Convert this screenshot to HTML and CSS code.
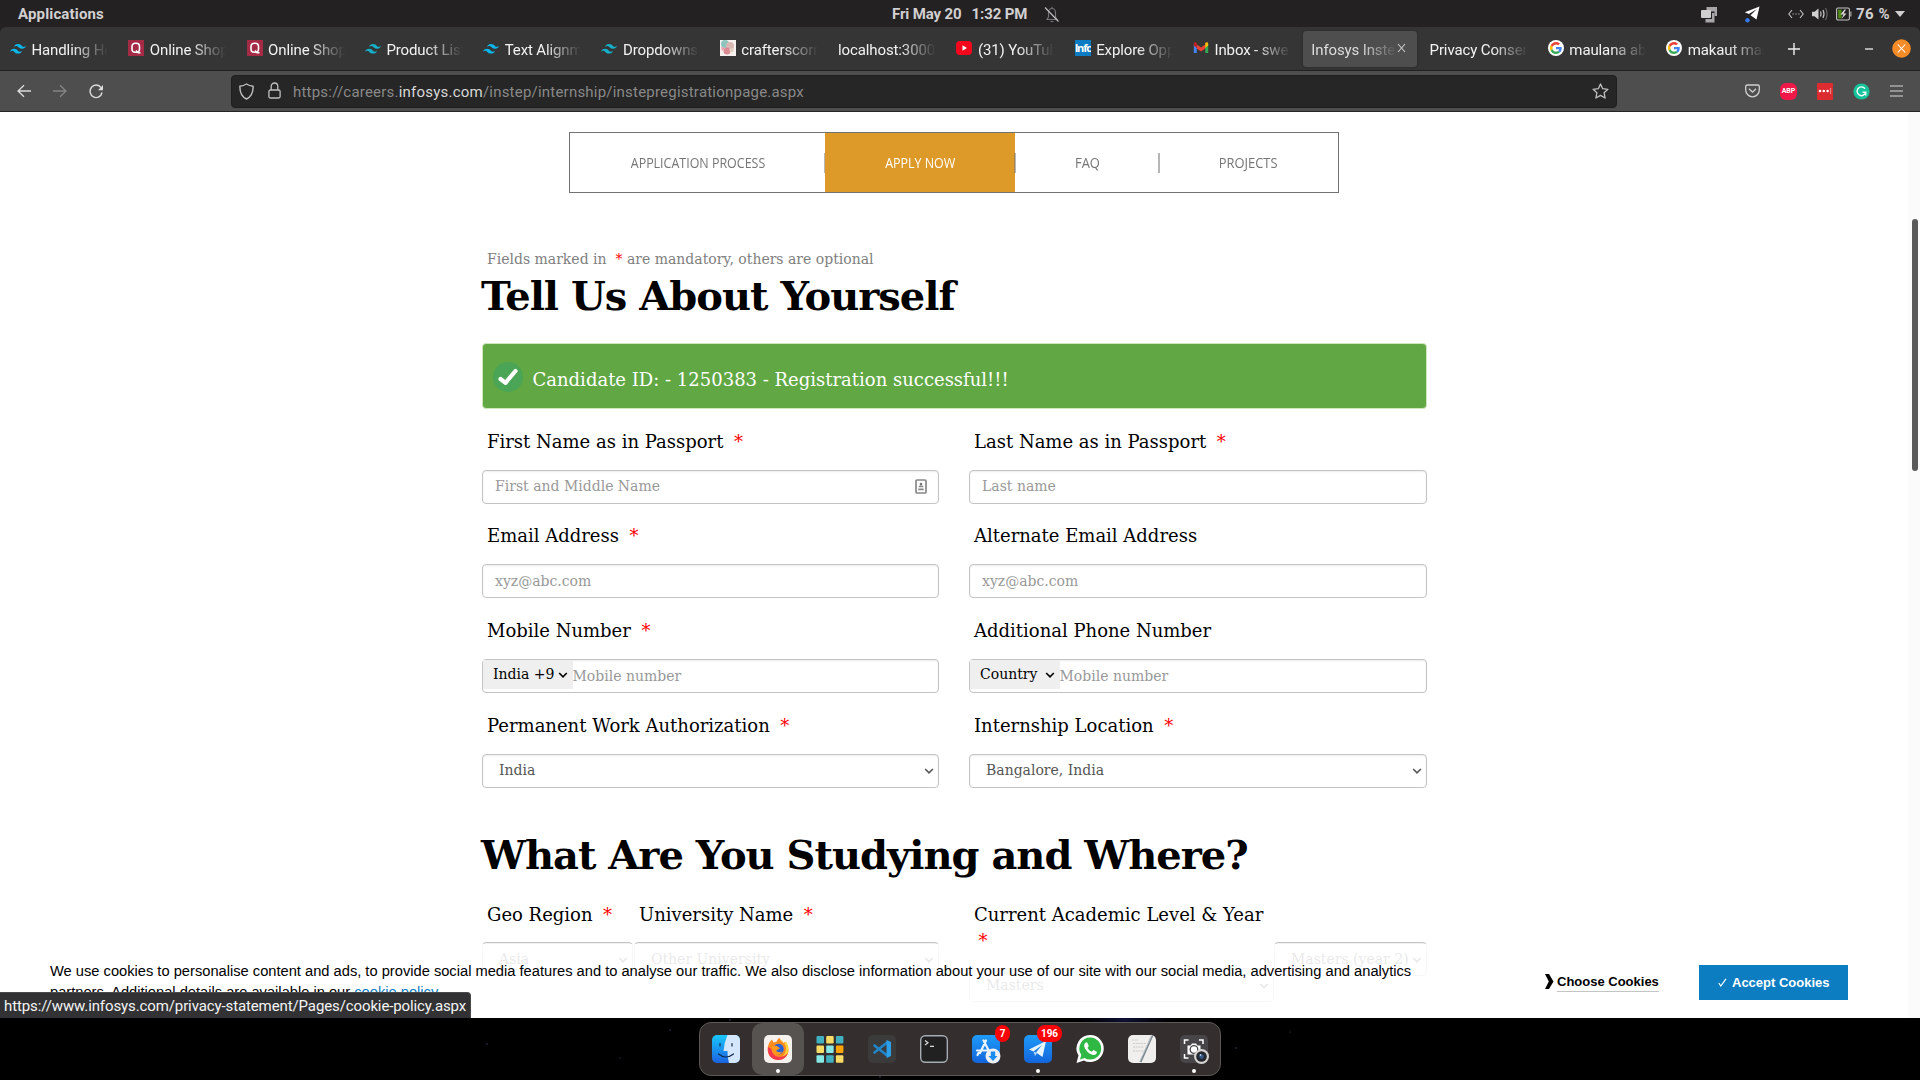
FILE: index.html
```html
<!DOCTYPE html>
<html lang="en">
<head>
<meta charset="utf-8">
<title>Infosys InStep</title>
<link rel="stylesheet" href="styles.css">
</head>
<body>
<svg width="0" height="0" class="defs">
  <symbol id="tailwind" viewBox="0 0 24 24"><path d="M12 6c-3.200 0-5.200 1.600-6 4.800 1.200-1.600 2.600-2.200 4.200-1.800.913.228 1.565.89 2.288 1.624C13.666 11.818 15.027 13.200 18 13.200c3.200 0 5.200-1.600 6-4.800-1.200 1.600-2.600 2.200-4.200 1.800-.913-.228-1.565-.89-2.288-1.624C16.337 7.382 14.976 6 12 6zM6 13.200c-3.200 0-5.200 1.600-6 4.800 1.200-1.600 2.600-2.200 4.200-1.800.913.228 1.565.89 2.288 1.624C7.666 19.018 9.027 20.400 12 20.400c3.200 0 5.200-1.600 6-4.800-1.200 1.600-2.600 2.200-4.200 1.800-.913-.228-1.565-.89-2.288-1.624C10.337 14.582 8.976 13.200 6 13.200z"/></symbol>
  <symbol id="quill" viewBox="0 0 16 16"><rect width="16" height="16" fill="#a42a45"/><rect x="4" y="3.200" width="7.500" height="9" rx="3.300" fill="none" stroke="#fff" stroke-width="1.600"/><path d="M8 10.500l2 2.300h2.500" fill="none" stroke="#fff" stroke-width="1.500"/></symbol>
  <symbol id="google" viewBox="0 0 48 48"><circle cx="24" cy="24" r="24" fill="#fff"/><g transform="translate(6 6) scale(.75)"><path fill="#EA4335" d="M24 9.500c3.540 0 6.710 1.220 9.210 3.600l6.850-6.850C35.900 2.380 30.470 0 24 0 14.620 0 6.510 5.380 2.560 13.220l7.980 6.190C12.430 13.720 17.740 9.500 24 9.500z"/><path fill="#4285F4" d="M46.980 24.550c0-1.570-.15-3.090-.38-4.550H24v9.020h12.940c-.58 2.960-2.260 5.480-4.780 7.180l7.730 6c4.510-4.180 7.090-10.360 7.090-17.650z"/><path fill="#FBBC05" d="M10.530 28.590c-.48-1.450-.76-2.990-.76-4.590s.27-3.140.76-4.590l-7.980-6.190C.92 16.460 0 20.120 0 24s.92 7.540 2.560 10.780l7.970-6.190z"/><path fill="#34A853" d="M24 48c6.480 0 11.930-2.130 15.890-5.810l-7.730-6c-2.150 1.450-4.920 2.300-8.160 2.300-6.260 0-11.570-4.220-13.470-9.910l-7.980 6.190C6.510 42.620 14.620 48 24 48z"/></g></symbol>
  <symbol id="chev" viewBox="0 0 10 6"><path d="M1.200 1l3.800 3.800L8.800 1" fill="none" stroke="currentColor" stroke-width="1.600"/></symbol>
  <symbol id="plane" viewBox="0 0 16 16"><path d="M15.500 1.500L.8 7.300l4 1.700L13 4 6.500 10.300l6 4.200z"/></symbol>
</svg>

<header class="topbar">
  <span class="apps">Applications</span>
  <div class="clock"><span>Fri May 20</span><span>1:32 PM</span>
    <svg width="16" height="17" viewBox="0 0 16 17" fill="none" stroke="#77757a" stroke-width="1.100"><path d="M3 13.500h10l-1.500-2.500V6.500a3.500 4 0 0 0-7 0V11zM6.500 15.500h3M8 2V.8"/><path d="M1 1.500l13.500 14" stroke="#c4c2c5"/></svg>
  </div>
  <div class="tray">
    <svg class="t1" width="16" height="17" viewBox="0 0 16 17"><path d="M5.500 1H16v9h-2.500V5.500h-8z" fill="#a8a6a8"/><rect y="4" width="10" height="8" rx="1" fill="#d0d0d0"/><path d="M4.500 13H11V7h2.500v9.500H4.500z" fill="#a8a6a8"/></svg>
    <svg class="t2" width="16" height="18" viewBox="0 0 16 18"><use href="#plane" width="16" height="16" fill="#fff"/><circle cx="3.500" cy="15.300" r="2.200" fill="#3478e8"/></svg>
    <svg class="t3" width="16" height="10" viewBox="0 0 16 10" fill="none" stroke="#c4c4c4" stroke-width="1.100"><path d="M4 1L.8 5 4 9M12 1l3.200 4L12 9M4.500 5h1.200M7.400 5h1.200M10.300 5h1.200"/></svg>
    <svg class="t4" width="17" height="14" viewBox="0 0 17 14" fill="none" stroke="#c4c4c4" stroke-width="1.200"><path d="M0 4.800h2.500L6.500 1.500v11L2.500 9.200H0z" fill="#d0d0d0" stroke="none"/><path d="M8.500 4.500q1.200 2.500 0 5M11 3q2 4 0 8"/><path d="M13.500 1q3.200 6 0 12" stroke="#666"/></svg>
    <svg class="t5" width="16" height="14" viewBox="0 0 16 14"><rect x=".6" y="1" width="12.800" height="12" rx="1.500" fill="none" stroke="#c4c4c4" stroke-width="1.100"/><path d="M2.200 2.600h3.500v8.800H2.200z" fill="#4e8a14"/><path d="M8.500 2.500L4.500 7.500h3L5.500 12l5-5.500h-3l2.500-4z" fill="#ddd"/><path d="M14.900 4.500v5" stroke="#c4c4c4"/></svg>
    <span class="pct">76 %</span>
    <svg class="t6" width="10" height="6" viewBox="0 0 10 6"><path d="M0 0h10L5 6z" fill="#d0d0d0"/></svg>
  </div>
</header>

<div class="tabs">
  <div class="tab"><svg class="fav" fill="#0ab8ee"><use href="#tailwind"/></svg><span class="name">Handling Hover</span></div>
  <div class="tab"><svg class="fav"><use href="#quill"/></svg><span class="name">Online Shopping</span></div>
  <div class="tab"><svg class="fav"><use href="#quill"/></svg><span class="name">Online Shopping</span></div>
  <div class="tab"><svg class="fav" fill="#14b0cc"><use href="#tailwind"/></svg><span class="name">Product Lists</span></div>
  <div class="tab"><svg class="fav" fill="#0ab8ee"><use href="#tailwind"/></svg><span class="name">Text Alignment</span></div>
  <div class="tab"><svg class="fav" fill="#14b0cc"><use href="#tailwind"/></svg><span class="name">Dropdowns -</span></div>
  <div class="tab"><svg class="fav" viewBox="0 0 16 16"><rect width="16" height="16" fill="#f6f1ee"/><circle cx="5" cy="4" r="4" fill="#8ec5bf"/><circle cx="10" cy="6" r="4" fill="#d9b8b4"/><circle cx="7" cy="11" r="3.500" fill="#d98a92"/><circle cx="11.500" cy="10" r="2.200" fill="#e0cdbf"/><path d="M1 7l4 1-3 3z" fill="#e99aa5"/></svg><span class="name">crafterscorner</span></div>
  <div class="tab"><span class="name">localhost:3000/</span></div>
  <div class="tab"><svg class="fav" viewBox="0 0 16 16"><rect y="1" width="16" height="14" rx="4" fill="#f6061c"/><path d="M6.500 5.300v5.400L11 8z" fill="#fff"/></svg><span class="name">(31) YouTube</span></div>
  <div class="tab"><span class="fav inf">Infc</span><span class="name">Explore Oppo</span></div>
  <div class="tab"><svg class="fav" viewBox="0 0 16 16"><path d="M.8 3.500v9.500h3V6z" fill="#4285f4"/><path d="M12.200 6v7h3V3.500z" fill="#34a853"/><path d="M3.800 4.500V8.500L8 11.500l4.200-3V4.500L8 7.500z" fill="#ea4335"/><path d="M.8 5.500V4c0-2 1.800-2 3-1v5z" fill="#c5221f"/><path d="M15.200 5.500V4c0-2-1.800-2-3-1v5z" fill="#fbbc04"/></svg><span class="name">Inbox - swe</span></div>
  <div class="tab active"><span class="name">Infosys Instep</span><svg class="x" width="9" height="10" viewBox="0 0 9 10"><path d="M1 1l7 8M8 1L1 9" stroke="#ccc" stroke-width="1.100"/></svg></div>
  <div class="tab"><span class="name">Privacy Consent</span></div>
  <div class="tab"><svg class="fav"><use href="#google"/></svg><span class="name">maulana abul</span></div>
  <div class="tab"><svg class="fav"><use href="#google"/></svg><span class="name">makaut mail</span></div>
  <div class="winctl">
    <svg width="12" height="12" viewBox="0 0 12 12"><path d="M6 0v12M0 6h12" stroke="#f0f0f0" stroke-width="1.400"/></svg>
    <svg class="min" width="8" height="12" viewBox="0 0 8 12"><path d="M0 6h8" stroke="#f0f0f0" stroke-width="1.300"/></svg>
    <svg class="close" width="19" height="19" viewBox="0 0 19 19"><circle cx="9.500" cy="9.500" r="9.300" fill="#f68c28"/><path d="M5.800 5.500l7.400 8M13.200 5.500l-7.400 8" stroke="#fff" stroke-width="1.100"/></svg>
  </div>
</div>

<div class="toolbar">
  <div class="navbtns">
    <svg width="14" height="14" viewBox="0 0 14 14" fill="none" stroke="#dcdcdc" stroke-width="1.300"><path d="M14 7H1M7 1.200L1 7l6 5.800"/></svg>
    <svg width="14" height="14" viewBox="0 0 14 14" fill="none" stroke="#858585" stroke-width="1.300"><path d="M0 7h13M7 1.200L13 7l-6 5.800"/></svg>
    <svg width="15" height="15" viewBox="0 0 15 15" fill="none" stroke="#dcdcdc" stroke-width="1.400"><path d="M12 3.600A6 6.300 0 1 0 13 8.500"/><path d="M14 1v5.200H9z" fill="#dcdcdc" stroke="none"/></svg>
  </div>
  <div class="url">
    <svg width="15" height="17" viewBox="0 0 15 17" fill="none" stroke="#c0c0c0" stroke-width="1.400"><path d="M7.500 1C5.500 2.300 3.300 3 .9 3.300.7 9.500 3 14 7.500 16c4.500-2 6.800-6.500 6.600-12.700C11.700 3 9.500 2.300 7.500 1z"/></svg>
    <svg class="lock" width="13" height="17" viewBox="0 0 13 17" fill="none" stroke="#c0c0c0" stroke-width="1.300"><rect x=".9" y="8" width="11.200" height="8" rx="1.500"/><path d="M3.200 8V4.300a3.300 3.300 0 0 1 6.600 0V8"/></svg>
    <span class="addr">https://careers.<b>infosys.com</b>/instep/internship/instepregistrationpage.aspx</span>
    <svg class="star" width="17" height="16" viewBox="0 0 17 16" fill="none" stroke="#c0c0c0" stroke-width="1.300" stroke-linejoin="round"><path d="M8.500 1l2.200 4.700 5.200.6-3.800 3.500 1 5.200-4.600-2.600L3.900 15l1-5.200L1.100 6.300l5.200-.6z"/></svg>
  </div>
  <div class="exts">
    <svg width="15" height="14" viewBox="0 0 15 14" fill="none" stroke="#d0d0d0" stroke-width="1.300"><path d="M2.200 1h10.600q1.500 0 1.500 1.500V6a6.800 6.800 0 0 1-13.600 0V2.500Q.7 1 2.200 1z"/><path d="M4 4.800l3.500 3.400L11 4.800"/></svg>
    <span class="abp">ABP</span>
    <span class="dots"><svg width="14" height="6" viewBox="0 0 14 6" fill="#fff"><circle cx="2" cy="3" r="1.300"/><circle cx="5.800" cy="3" r="1.300"/><circle cx="9.600" cy="3" r="1.300"/><path d="M12.300 0h.8v6h-.8z" opacity=".6"/></svg></span>
    <svg width="17" height="17" viewBox="0 0 17 17"><circle cx="8.500" cy="8.500" r="8.100" fill="#15c39a"/><path d="M12 5.600A4.400 4.400 0 1 0 12.800 9.200H9.500M12.700 9v3.400" fill="none" stroke="#fff" stroke-width="1.400"/></svg>
    <svg width="13" height="12" viewBox="0 0 13 12"><path d="M0 1h13M0 6h13M0 11h13" stroke="#d8d8d8" stroke-width="1.200"/></svg>
  </div>
</div>

<main class="page">
  <nav class="steps">
    <a class="s1"><span>APPLICATION PROCESS</span></a><a class="s2"><span>APPLY NOW</span></a><a class="s3"><span>FAQ</span></a><a class="s4"><span>PROJECTS</span></a>
  </nav>
  <div class="content">
    <p class="note">Fields marked in <i class="req">&nbsp;*</i> are mandatory, others are optional</p>
    <h1>Tell Us About Yourself</h1>
    <div class="alert"><svg width="30" height="30" viewBox="0 0 30 30"><circle cx="15" cy="15" r="15" fill="#4ba556"/><path d="M7.500 17l5 3.800L22.500 9" fill="none" stroke="#fff" stroke-width="4.200" stroke-linecap="round" stroke-linejoin="round"/></svg><span>Candidate ID: - 1250383 - Registration successful!!!</span></div>
    <div class="grid">
      <div class="field first"><label>First Name as in Passport<i>*</i></label><div class="box"><input placeholder="First and Middle Name"><svg class="card" width="12" height="15" viewBox="0 0 12 15"><rect x="1" y="1" width="10" height="13" rx="1" fill="none" stroke="#888" stroke-width="1.700"/><circle cx="6" cy="5" r="1.300" fill="#777"/><path d="M3.500 8.300q0-2 2.500-2t2.500 2zM3.300 9.500h5.400v1.800H3.300z" fill="#888"/></svg></div></div>
      <div class="field first"><label>Last Name as in Passport<i>*</i></label><div class="box"><input placeholder="Last name"></div></div>
      <div class="field"><label>Email Address<i>*</i></label><div class="box"><input placeholder="xyz@abc.com"></div></div>
      <div class="field"><label>Alternate Email Address</label><div class="box"><input placeholder="xyz@abc.com"></div></div>
      <div class="field"><label>Mobile Number<i>*</i></label><div class="box phone"><span class="cc">India +9<svg class="chev"><use href="#chev"/></svg></span><input placeholder="Mobile number"></div></div>
      <div class="field"><label>Additional Phone Number</label><div class="box phone"><span class="cc">Country<svg class="chev"><use href="#chev"/></svg></span><input placeholder="Mobile number"></div></div>
      <div class="field"><label>Permanent Work Authorization<i>*</i></label><div class="box sel">India<svg class="chev"><use href="#chev"/></svg></div></div>
      <div class="field"><label>Internship Location<i>*</i></label><div class="box sel">Bangalore, India<svg class="chev"><use href="#chev"/></svg></div></div>
    </div>
    <h1 class="second">What Are You Studying and Where?</h1>
    <div class="study">
      <div class="field"><label>Geo Region<i>*</i></label><div class="box sel">Asia<svg class="chev"><use href="#chev"/></svg></div></div>
      <div class="field"><label>University Name<i>*</i></label><div class="box sel">Other University<svg class="chev"><use href="#chev"/></svg></div></div>
      <div class="field level"><label>Current Academic Level &amp; Year <i>*</i></label><div class="box sel">Masters<svg class="chev"><use href="#chev"/></svg></div></div>
      <div class="field year"><label>&nbsp;</label><div class="box sel">Masters (year 2)<svg class="chev"><use href="#chev"/></svg></div></div>
    </div>
  </div>
  <div class="scroll"><div class="thumb"></div></div>
  <div class="cookies">
    <p>We use cookies to personalise content and ads, to provide social media features and to analyse our traffic. We also disclose information about your use of our site with our social media, advertising and analytics partners. Additional details are available in our <a>cookie policy.</a></p>
    <div class="choose"><svg width="9" height="15" viewBox="0 0 9 15"><path d="M0 0h4L8.500 7.500 4 15H0l3.800-7.500z"/></svg><span>Choose Cookies</span></div>
    <div class="accept"><svg width="9" height="9" viewBox="0 0 9 9"><path d="M.8 5l2 3L8 .8" fill="none" stroke="#fff" stroke-width="1.200"/></svg><span>Accept Cookies</span></div>
  </div>
  <div class="status">https://www.infosys.com/privacy-statement/Pages/cookie-policy.aspx</div>
</main>

<footer class="desk">
  <svg class="stars" width="1920" height="62"><defs><radialGradient id="neb"><stop offset="0" stop-color="#10123a"/><stop offset="1" stop-color="#000" stop-opacity="0"/></radialGradient></defs><ellipse cx="1125" cy="2" rx="60" ry="12" fill="url(#neb)"/><g fill="#454568"><circle cx="487" cy="26" r=".7"/><circle cx="620" cy="40" r=".6"/><circle cx="670" cy="12" r=".7"/><circle cx="730" cy="2" r=".8"/><circle cx="880" cy="59" r=".8"/><circle cx="1033" cy="58" r=".8"/><circle cx="1236" cy="30" r=".7"/><circle cx="1290" cy="14" r=".6"/></g></svg>
  <div class="dock">
    <div class="app"><svg viewBox="0 0 28 28"><defs><linearGradient id="fa" x2="0" y2="1"><stop offset="0" stop-color="#19c6fb"/><stop offset="1" stop-color="#1b63e0"/></linearGradient><linearGradient id="bl" x2="0" y2="1"><stop offset="0" stop-color="#1f9bf8"/><stop offset="1" stop-color="#1265dc"/></linearGradient></defs><rect width="28" height="28" rx="5" fill="url(#fa)"/><path d="M15.500 0Q12 8 11.500 16h4q-.2 6 1.500 12h6a5 5 0 0 0 5-5V5a5 5 0 0 0-5-5z" fill="#d4e6fc"/><path d="M8 8.500v2.500M20 8.500v2.500M6.500 19q7.500 6 15 0" fill="none" stroke="#10284a" stroke-width="1.200" stroke-linecap="round"/></svg></div>
    <div class="app on"><svg viewBox="0 0 28 28"><rect width="28" height="28" rx="5" fill="#f5f1ee"/><path d="M8 4.500l1.500 3 3-.8c1.500-3.500 3-4 3-4q.5 2.500 3 4l1 1.600 1.500-1.500c5 6 5 15-3 17.500-9 2.500-15-3.500-14.300-11C4 9.500 6 6 8 4.500z" fill="#ff8a1e"/><path d="M15.500 2.700c1 3 6.500 4.500 6.500 11 0 4-2 6.500-4 8 7-1 8.500-9 4-15l-1.500 1.500c-2-1-4.500-2.500-5-5.500z" fill="#ffd23a"/><path d="M4 12c-1 8 4 13 10 13s8.500-3.500 9.500-7q-3 4-7.500 4c-6 0-8-4-8.500-8z" fill="#f5384f"/><circle cx="14.500" cy="14" r="5.300" fill="#2a63d8"/><path d="M9 10.500l4 .5 3 2.200-4 2.500q2 2.500 6.500.8-3 4-7.500 2.300c-4-2-4-6-2-8.300z" fill="#ff9a1e"/></svg><i class="dot"></i></div>
    <div class="app"><svg viewBox="0 0 28 28"><g><rect x=".5" y="1" width="7.500" height="7.500" rx="1" fill="#41b1c1"/><rect x="10.200" y="1" width="7.500" height="7.500" rx="1" fill="#f8dc65"/><rect x="19.900" y="1" width="7.500" height="7.500" rx="1" fill="#41b1c1"/><rect x=".5" y="10.600" width="7.500" height="7.500" rx="1" fill="#f8dc65"/><rect x="10.200" y="10.600" width="7.500" height="7.500" rx="1" fill="#86e9e6"/><rect x="19.900" y="10.600" width="7.500" height="7.500" rx="1" fill="#fda504"/><rect x=".5" y="20.200" width="7.500" height="7.500" rx="1" fill="#86e9e6"/><rect x="10.200" y="20.200" width="7.500" height="7.500" rx="1" fill="#41b1c1"/><rect x="19.900" y="20.200" width="7.500" height="7.500" rx="1" fill="#f8dc65"/></g></svg></div>
    <div class="app"><svg viewBox="0 0 28 28"><rect width="28" height="28" rx="5" fill="#3b3b3b"/><path d="M6.500 10.500L18.500 20M6.500 17.500L18.500 8" stroke="#1f86cc" stroke-width="2.600" stroke-linecap="round"/><path d="M18.500 5l4.500 2v14l-4.500 2z" fill="#2ba0e8"/></svg></div>
    <div class="app"><svg viewBox="0 0 28 28"><rect x=".7" y=".7" width="26.600" height="26.600" rx="4.500" fill="#212121" stroke="#a5acb2" stroke-width="1.400"/><path d="M5 5.500l3 2.300-3 2.300M10 11.300h4" fill="none" stroke="#ddd" stroke-width="1.200"/></svg></div>
    <div class="app"><svg viewBox="0 0 28 28"><rect width="28" height="28" rx="5" fill="url(#bl)"/><path d="M14 5.500L8 18M11.500 5.500L18 18M5 15.500h12M6.500 18l-1 2" stroke="#e8f4ff" stroke-width="2.200" stroke-linecap="round"/><circle cx="21" cy="21" r="7.500" fill="#eef0f3"/><path d="M18.800 16.500h4.400V21h2.300L21 26l-4.500-5h2.300z" fill="#1a8cf2"/></svg><b class="badge">7</b></div>
    <div class="app"><svg viewBox="0 0 28 28"><rect width="28" height="28" rx="5" fill="url(#bl)"/><path d="M22 6L5 14.500l4.500 2L18 10l-6 7.500 6.500 4.500z" fill="#e8f5ff"/><path d="M9.500 16.500L11 21l2-3z" fill="#b8d8f5"/></svg><b class="badge wide">196</b><i class="dot"></i></div>
    <div class="app"><svg viewBox="0 0 28 28"><path d="M14.500 0A13.400 13.400 0 0 1 14 27q-3.500 0-6-1.500L.5 28l2-7.500A13.500 13.500 0 0 1 14.500 0z" fill="#fff"/><path d="M14.300 2.500A11 11 0 0 1 14 24.500q-3 0-5.500-1.600L4 24.400l1.300-4.600A11 11 0 0 1 14.300 2.500z" fill="#2fb944"/><path d="M10 7.500c-2 1-2.500 3.500-.8 6.300 2 3.500 5 5.700 8 6.200 2 .2 3.500-1 3.800-3l-3.500-2-1.800 1.800c-2-.8-3.300-2.200-4.200-4l1.300-1.800L11.300 7.500z" fill="#fff"/></svg></div>
    <div class="app"><svg viewBox="0 0 28 28"><rect width="28" height="28" rx="5" fill="#f0efed"/><path d="M4 5h6M5 8.500h13M5 12h11M5 16h12" stroke="#c5c3c0" stroke-width=".8" stroke-dasharray="2 .7"/><path d="M24.500 0L12.500 27" stroke="#7b868d" stroke-width="2"/><path d="M23.800 0L12 26" stroke="#c8d0d5" stroke-width=".9"/></svg></div>
    <div class="app"><svg viewBox="0 0 28 28"><rect width="28" height="28" rx="5" fill="#484548"/><path d="M4.500 9V5h4M19 5h4v4M4.500 19v4h4" fill="none" stroke="#fff" stroke-width="1.500"/><path d="M7.500 10.500h3L12 8.500h4l1.500 2h3v9h-13z" fill="#fff"/><circle cx="14" cy="14.500" r="3.800" fill="#fff" stroke="#484548" stroke-width="1.300"/><circle cx="21.500" cy="21.500" r="7.500" fill="#d5d3d1"/><circle cx="21.500" cy="21.500" r="5.300" fill="#24272e"/><circle cx="21.500" cy="21.500" r="2.300" fill="#36588a"/><circle cx="20.500" cy="20" r=".9" fill="#b8cae8"/></svg><i class="dot"></i></div>
  </div>
</footer>
</body>
</html>
```
FILE: styles.css
```css
* { box-sizing: border-box; }
body { margin: 0; width: 1920px; height: 1080px; overflow: hidden; display: flex; flex-direction: column; background: #242122; font-family: "DejaVu Serif", serif; }
svg { display: block; flex: none; }
.defs { position: absolute; }
p, h1 { margin: 0; }
i, b { font-style: normal; }

.topbar { flex: none; height: 27px; display: grid; grid-template-columns: 892px 1fr auto; align-items: center; background: #242122; color: #d2d0d1; font: bold 15px/28px Roboto, sans-serif; }
.apps { padding-left: 18px; letter-spacing: .15px; }
.clock { display: flex; align-items: center; gap: 10px; letter-spacing: -.12px; }
.clock svg { margin-left: 7px; }
.tray { display: flex; align-items: center; padding-right: 15px; }
.t2 { margin-left: 27px; }
.t3 { margin-left: 28px; }
.t4 { margin-left: 8px; }
.t5 { margin-left: 7px; }
.pct { width: 36px; margin-left: 4px; letter-spacing: .5px; }
.t6 { margin-left: 3px; }

.tabs { flex: none; height: 44px; display: flex; align-items: center; padding: 0 9px 0 2px; background: #353535; border-bottom: 1px solid #202020; border-radius: 6px 6px 0 0; color: #f2f2f2; font: 15px/36px Roboto, sans-serif; }
.tab { flex: none; width: 114px; margin-right: 4.300px; height: 36px; margin-top: 2px; margin-bottom: 2px; padding: 0 8px; display: flex; align-items: center; border-radius: 3px; }
.fav { width: 16px; height: 16px; flex: none; margin-right: 5.500px; margin-top: -1px; }
.inf { background: #0b7bc4; color: #fff; font: bold 11px/16px "Open Sans", sans-serif; letter-spacing: -1.200px; overflow: hidden; }
.name { flex: 1; min-width: 0; overflow: hidden; white-space: nowrap; position: relative; top: 1px; letter-spacing: -.12px; -webkit-mask-image: linear-gradient(to left, transparent, #000 36px); mask-image: linear-gradient(to left, transparent, #000 36px); }
.active { background: #4e4e4e; box-shadow: 0 0 2px #222; color: #ddd; }
.active .x { margin: -1px 3px 0 0; }
.winctl { flex: 1; display: flex; align-items: center; padding-left: 12px; }
.min { margin-left: 65px; }
.close { margin-left: auto; }

.toolbar { flex: none; height: 41px; display: flex; align-items: center; background: #4e4e4e; border-bottom: 1px solid #242424; }
.navbtns { width: 231px; padding-left: 17px; display: flex; align-items: center; gap: 22px; }
.url { width: 1386px; height: 33px; display: flex; align-items: center; padding: 0 7px; border-radius: 4px; background: #262626; border: 1px solid #1f1f1f; font: 15px/32px Roboto, sans-serif; color: #898989; }
.lock { margin: -2px 12px 0 14px; }
.addr { flex: 1; letter-spacing: .215px; padding-top: 1px; }
.addr b { font-weight: 400; color: #d8d8d8; }
.exts { flex: 1; display: flex; align-items: center; justify-content: space-between; padding: 0 17px 0 128px; }
.abp { width: 17px; height: 17px; border-radius: 6px; background: #ef1848; color: #fff; font: bold 7px/17px Roboto, sans-serif; text-align: center; }
.dots { width: 16px; height: 17px; background: #dc2c30; border-radius: 1px; display: flex; align-items: center; justify-content: center; }

.page { flex: none; height: 906px; position: relative; overflow: hidden; background: #fff; }
.steps { display: flex; width: 770px; height: 61px; margin: 20px 0 0 569px; border: 1px solid #727272; color: #757575; font: 15px/58px "Open Sans", sans-serif; }
.steps a { display: flex; justify-content: center; position: relative; white-space: nowrap; }
.steps a:not(:last-child)::after { content: ""; position: absolute; right: -1px; top: 20px; width: 2px; height: 20px; background: rgba(110,110,110,.5); }
.steps span { transform: scaleX(.83); }
.s1 { width: 255px; }
.s2 { width: 190px; background: #de9a28; color: #fff; }
.s3 { width: 144px; }
.s4 { flex: 1; }
.steps .s3 span, .steps .s4 span { transform: scaleX(.86); }

.content { width: 945px; margin: 56px 0 0 482px; }
.note { padding-left: 5px; font-size: 14px; line-height: 20px; color: #808080; }
.req { color: red; }
h1 { margin: 5px 0 0 -1px; font-size: 40px; line-height: 44px; letter-spacing: -1px; color: #000; white-space: nowrap; }
.alert { height: 66px; margin-top: 25px; padding: 0 0 0 10px; display: flex; align-items: center; background: #61a744; border: 1px solid #d0e6bd; border-radius: 4px; color: #fff; font-size: 18px; }
.alert svg { margin: 1px 9.500px 0 0; }
.alert span { padding-top: 7px; }
.grid { margin-top: 19.600px; display: grid; grid-template-columns: 457px 458px; column-gap: 30px; row-gap: 19.800px; }
.field { min-width: 0; }
.field label { display: block; min-height: 41px; padding-left: 5px; font-size: 18px; line-height: 25.700px; color: #000; }
.field label i { color: red; margin-left: 10.500px; }
.box { height: 34px; display: flex; align-items: center; border: 1px solid #c4c4c4; border-radius: 4px; box-shadow: inset 0 1px 2px rgba(0,0,0,.08); font-size: 14px; color: #555; background: #fff; }
.box input { flex: 1; min-width: 0; height: 30px; border: 0; outline: 0; padding: 0 12px; background: transparent; font: 14px/30px "DejaVu Serif", serif; color: #555; }
.first .box input { padding-bottom: 2px; }
.box input::placeholder { color: #999; opacity: 1; }
.card { margin-right: 11px; }
.phone { align-items: flex-start; }
.phone input { padding: 2px 0 0; }
.cc { width: 90px; height: 29px; display: flex; align-items: center; justify-content: space-between; padding: 0 5px 2px 10px; background: #efefef; color: #000; }
.box.phone input { margin-left: -.5px; }
.chev { width: 10px; height: 6px; }
.cc .chev { margin-top: 2px; }
.sel { padding: 0 4px 1px 16px; justify-content: space-between; white-space: nowrap; }
.sel .chev { margin-top: 2px; }
h1.second { margin-top: 45.250px; }
.study { margin-top: 25px; display: grid; grid-template-columns: 152px 305px 305px 153px; align-items: start; }
.study .field label { min-height: 40px; white-space: nowrap; }
.study .field:first-child .box { width: 151px; }
.study .level { margin-left: 30px; width: 305px; }
.study .level label { white-space: normal; padding-bottom: 14.600px; }
.study .level label i { margin-left: 4.500px; }
.study .year { margin-left: 30px; width: 153px; }

.scroll { position: absolute; right: 0; top: 0; width: 12px; height: 100%; background: #fbfbfb; }
.thumb { width: 6px; height: 252px; margin: 107px 0 0 4px; border-radius: 3px; background: #5a5a5a; }
.cookies { position: absolute; left: 0; bottom: 0; width: 1908px; height: 74px; background: rgba(255,255,255,.87); font: 14.680px/21px "Liberation Sans", Arial, sans-serif; color: #000; display: flex; }
.cookies p { width: 1380px; margin: 17px 0 0 50px; }
.cookies a { color: #0c7dc1; }
.choose { display: flex; width: 154px; height: 27px; margin: 21px 0 0 115px; font: bold 13px/20px "Liberation Sans", Arial, sans-serif; }
.choose svg { margin: 9px 3px 0 0; }
.choose span { border-bottom: 1px solid #c4c4c4; height: 27px; padding-top: 7px; white-space: nowrap; }
.accept { display: flex; align-items: center; gap: 5px; width: 149px; height: 35px; margin: 21px 0 0; padding-left: 19px; background: #0c7dc1; color: #fff; font: bold 13px/35px "Liberation Sans", Arial, sans-serif; }
.status { position: absolute; left: 0; bottom: 0; width: 471px; height: 26px; padding-left: 4px; background: #323234; border: solid #4a4a4c; border-width: 1px 1px 0 0; border-radius: 0 4px 0 0; color: #f4f4f4; font: 15px/27px Roboto, sans-serif; letter-spacing: -.11px; white-space: nowrap; }

.desk { flex: none; height: 62px; position: relative; background: #000; display: flex; padding: 4px 0 0 699px; }
.stars { position: absolute; left: 0; top: 0; }
.dock { position: relative; width: 522px; height: 54px; display: flex; background: #342f2e; border: 1px solid #5c5857; border-radius: 12px; }
.app { width: 52px; height: 52px; position: relative; display: flex; align-items: center; justify-content: center; border-radius: 10px; }
.app svg { width: 28px; height: 28px; overflow: visible; }
.on { background: #575351; }
.dot { position: absolute; left: 24px; bottom: 2px; width: 4px; height: 4px; border-radius: 2px; background: #fff; }
.badge { position: absolute; left: 35px; top: 2px; min-width: 15px; height: 17px; border-radius: 8px; background: #fb0207; color: #fff; font: bold 10px/17px Roboto, sans-serif; text-align: center; }
.badge.wide { left: 25px; width: 25px; }
```
